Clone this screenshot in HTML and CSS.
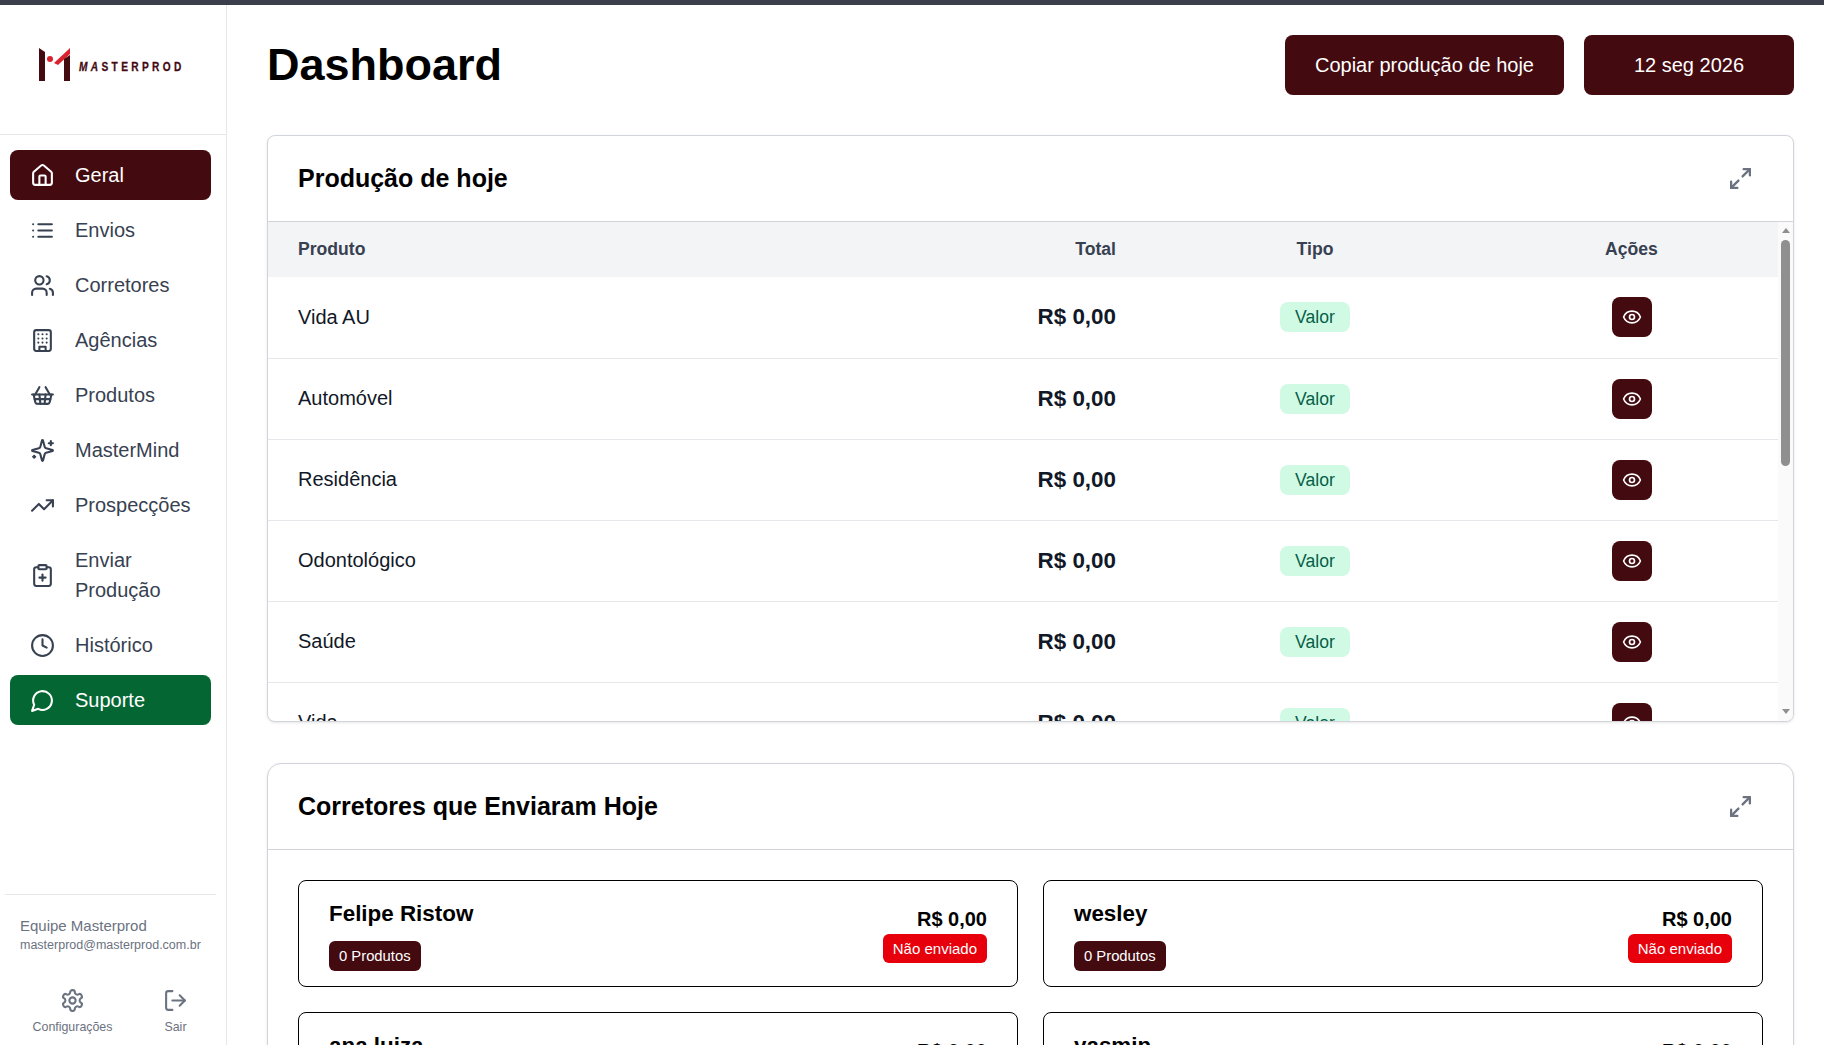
FILE: index.html
```html
<!DOCTYPE html>
<html lang="pt-BR">
<head>
    <meta charset="UTF-8">
    <meta name="viewport" content="width=device-width, initial-scale=1.0">
    <title>Dashboard</title>
    <link rel="stylesheet" href="styles.css">
</head>
<body>
    <svg class="sprite" xmlns="http://www.w3.org/2000/svg">
        <symbol id="i-house" viewBox="0 0 24 24"><path d="M15 21v-8a1 1 0 0 0-1-1h-4a1 1 0 0 0-1 1v8"/><path d="M3 10a2 2 0 0 1 .709-1.528l7-5.999a2 2 0 0 1 2.582 0l7 5.999A2 2 0 0 1 21 10v9a2 2 0 0 1-2 2H5a2 2 0 0 1-2-2z"/></symbol>
        <symbol id="i-list" viewBox="0 0 24 24"><path d="M3 12h.01M3 18h.01M3 6h.01M8 12h13M8 18h13M8 6h13"/></symbol>
        <symbol id="i-users" viewBox="0 0 24 24"><path d="M16 21v-2a4 4 0 0 0-4-4H6a4 4 0 0 0-4 4v2"/><circle cx="9" cy="7" r="4"/><path d="M22 21v-2a4 4 0 0 0-3-3.87"/><path d="M16 3.13a4 4 0 0 1 0 7.75"/></symbol>
        <symbol id="i-building" viewBox="0 0 24 24"><rect x="4" y="2" width="16" height="20" rx="2"/><path d="M9 22v-4h6v4"/><path d="M8 6h.01M16 6h.01M12 6h.01M12 10h.01M12 14h.01M16 10h.01M16 14h.01M8 10h.01M8 14h.01"/></symbol>
        <symbol id="i-basket" viewBox="0 0 24 24"><path d="m15 11-1 9"/><path d="m19 11-4-7"/><path d="M2 11h20"/><path d="m3.5 11 1.6 7.4a2 2 0 0 0 2 1.6h9.8a2 2 0 0 0 2-1.6l1.7-7.4"/><path d="M4.5 15.5h15"/><path d="m5 11 4-7"/><path d="m9 11 1 9"/></symbol>
        <symbol id="i-sparkles" viewBox="0 0 24 24"><path d="M9.937 15.5A2 2 0 0 0 8.5 14.063l-6.135-1.582a.5.5 0 0 1 0-.962L8.5 9.936A2 2 0 0 0 9.937 8.5l1.582-6.135a.5.5 0 0 1 .963 0L14.063 8.5A2 2 0 0 0 15.5 9.937l6.135 1.581a.5.5 0 0 1 0 .964L15.5 14.063a2 2 0 0 0-1.437 1.437l-1.582 6.135a.5.5 0 0 1-.963 0z"/><path d="M20 3v4"/><path d="M22 5h-4"/><path d="M4 17v2"/><path d="M5 18H3"/></symbol>
        <symbol id="i-trending" viewBox="0 0 24 24"><polyline points="22 7 13.5 15.5 8.5 10.5 2 17"/><polyline points="16 7 22 7 22 13"/></symbol>
        <symbol id="i-clipboard" viewBox="0 0 24 24"><rect x="8" y="2" width="8" height="4" rx="1"/><path d="M16 4h2a2 2 0 0 1 2 2v14a2 2 0 0 1-2 2H6a2 2 0 0 1-2-2V6a2 2 0 0 1 2-2h2"/><path d="M9 14h6"/><path d="M12 17v-6"/></symbol>
        <symbol id="i-clock" viewBox="0 0 24 24"><circle cx="12" cy="12" r="10"/><polyline points="12 6 12 12 16 14"/></symbol>
        <symbol id="i-message" viewBox="0 0 24 24"><path d="M7.9 20A9 9 0 1 0 4 16.1L2 22Z"/></symbol>
        <symbol id="i-settings" viewBox="0 0 24 24"><path d="M12.22 2h-.44a2 2 0 0 0-2 2v.18a2 2 0 0 1-1 1.73l-.43.25a2 2 0 0 1-2 0l-.15-.08a2 2 0 0 0-2.73.73l-.22.38a2 2 0 0 0 .73 2.73l.15.1a2 2 0 0 1 1 1.72v.51a2 2 0 0 1-1 1.74l-.15.09a2 2 0 0 0-.73 2.73l.22.38a2 2 0 0 0 2.73.73l.15-.08a2 2 0 0 1 2 0l.43.25a2 2 0 0 1 1 1.73V20a2 2 0 0 0 2 2h.44a2 2 0 0 0 2-2v-.18a2 2 0 0 1 1-1.73l.43-.25a2 2 0 0 1 2 0l.15.08a2 2 0 0 0 2.73-.73l.22-.39a2 2 0 0 0-.73-2.73l-.15-.08a2 2 0 0 1-1-1.74v-.5a2 2 0 0 1 1-1.74l.15-.09a2 2 0 0 0 .73-2.73l-.22-.38a2 2 0 0 0-2.73-.73l-.15.08a2 2 0 0 1-2 0l-.43-.25a2 2 0 0 1-1-1.73V4a2 2 0 0 0-2-2z"/><circle cx="12" cy="12" r="3"/></symbol>
        <symbol id="i-logout" viewBox="0 0 24 24"><path d="M9 21H5a2 2 0 0 1-2-2V5a2 2 0 0 1 2-2h4"/><polyline points="16 17 21 12 16 7"/><line x1="21" y1="12" x2="9" y2="12"/></symbol>
        <symbol id="i-expand" viewBox="0 0 24 24"><path d="M15 3h6v6"/><path d="m21 3-7 7"/><path d="m3 21 7-7"/><path d="M9 21H3v-6"/></symbol>
        <symbol id="i-eye" viewBox="0 0 24 24"><path d="M2.062 12.348a1 1 0 0 1 0-.696 10.75 10.75 0 0 1 19.876 0 1 1 0 0 1 0 .696 10.75 10.75 0 0 1-19.876 0"/><circle cx="12" cy="12" r="3"/></symbol>
    </svg>

    <div class="top-bar"></div>

    <div class="layout">
        <aside class="sidebar">
            <div class="logo">
                <svg class="logo-mark" viewBox="0 0 32 34" xmlns="http://www.w3.org/2000/svg">
                    <polygon fill="#430a10" points="0,0 6,4 6,33 0,33"/>
                    <circle fill="#d8232f" cx="11" cy="11" r="3"/>
                    <polygon fill="#d8232f" points="15,15 31,0 31,6 19,17"/>
                    <polygon fill="#430a10" points="25,11 31,7 31,33 25,33"/>
                </svg>
                <span class="logo-text"><em>MA</em>STERPROD</span>
            </div>

            <nav class="nav">
                <a class="nav-item active" href="#"><svg class="icon"><use href="#i-house"/></svg><span>Geral</span></a>
                <a class="nav-item" href="#"><svg class="icon"><use href="#i-list"/></svg><span>Envios</span></a>
                <a class="nav-item" href="#"><svg class="icon"><use href="#i-users"/></svg><span>Corretores</span></a>
                <a class="nav-item" href="#"><svg class="icon"><use href="#i-building"/></svg><span>Agências</span></a>
                <a class="nav-item" href="#"><svg class="icon"><use href="#i-basket"/></svg><span>Produtos</span></a>
                <a class="nav-item" href="#"><svg class="icon"><use href="#i-sparkles"/></svg><span>MasterMind</span></a>
                <a class="nav-item" href="#"><svg class="icon"><use href="#i-trending"/></svg><span>Prospecções</span></a>
                <a class="nav-item" href="#"><svg class="icon"><use href="#i-clipboard"/></svg><span>Enviar<br>Produção</span></a>
                <a class="nav-item" href="#"><svg class="icon"><use href="#i-clock"/></svg><span>Histórico</span></a>
                <a class="nav-item support" href="#"><svg class="icon"><use href="#i-message"/></svg><span>Suporte</span></a>
            </nav>

            <div class="side-footer">
                <p class="team">Equipe Masterprod</p>
                <p class="email">masterprod@masterprod.com.br</p>
                <div class="side-actions">
                    <a class="side-action settings" href="#"><svg class="icon"><use href="#i-settings"/></svg><span>Configurações</span></a>
                    <a class="side-action logout" href="#"><svg class="icon"><use href="#i-logout"/></svg><span>Sair</span></a>
                </div>
            </div>
        </aside>

        <main class="main">
            <header class="page-header">
                <h1>Dashboard</h1>
                <div class="header-actions">
                    <button class="btn copy-btn">Copiar produção de hoje</button>
                    <button class="btn date-btn">12 seg 2026</button>
                </div>
            </header>

            <section class="card production">
                <div class="card-header">
                    <h2>Produção de hoje</h2>
                    <svg class="expand"><use href="#i-expand"/></svg>
                </div>
                <div class="table-area">
                    <div class="table-wrap">
                        <table>
                            <colgroup>
                                <col class="col-product">
                                <col class="col-total">
                                <col class="col-type">
                                <col class="col-actions">
                            </colgroup>
                            <thead>
                                <tr><th>Produto</th><th class="right">Total</th><th>Tipo</th><th>Ações</th></tr>
                            </thead>
                            <tbody>
                                <tr><td>Vida AU</td><td class="amount">R$ 0,00</td><td><span class="tag">Valor</span></td><td><button class="eye-btn"><svg><use href="#i-eye"/></svg></button></td></tr>
                                <tr><td>Automóvel</td><td class="amount">R$ 0,00</td><td><span class="tag">Valor</span></td><td><button class="eye-btn"><svg><use href="#i-eye"/></svg></button></td></tr>
                                <tr><td>Residência</td><td class="amount">R$ 0,00</td><td><span class="tag">Valor</span></td><td><button class="eye-btn"><svg><use href="#i-eye"/></svg></button></td></tr>
                                <tr><td>Odontológico</td><td class="amount">R$ 0,00</td><td><span class="tag">Valor</span></td><td><button class="eye-btn"><svg><use href="#i-eye"/></svg></button></td></tr>
                                <tr><td>Saúde</td><td class="amount">R$ 0,00</td><td><span class="tag">Valor</span></td><td><button class="eye-btn"><svg><use href="#i-eye"/></svg></button></td></tr>
                                <tr><td>Vida</td><td class="amount">R$ 0,00</td><td><span class="tag">Valor</span></td><td><button class="eye-btn"><svg><use href="#i-eye"/></svg></button></td></tr>
                            </tbody>
                        </table>
                    </div>
                    <div class="scroll-rail">
                        <span class="arrow-up"></span>
                        <span class="scroll-thumb"></span>
                        <span class="arrow-down"></span>
                    </div>
                </div>
            </section>

            <section class="card brokers">
                <div class="card-header">
                    <h2>Corretores que Enviaram Hoje</h2>
                    <svg class="expand"><use href="#i-expand"/></svg>
                </div>
                <div class="broker-grid">
                    <div class="broker">
                        <div class="broker-info"><h3>Felipe Ristow</h3><span class="count">0 Produtos</span></div>
                        <div class="broker-status"><strong>R$ 0,00</strong><span class="not-sent">Não enviado</span></div>
                    </div>
                    <div class="broker">
                        <div class="broker-info"><h3>wesley</h3><span class="count">0 Produtos</span></div>
                        <div class="broker-status"><strong>R$ 0,00</strong><span class="not-sent">Não enviado</span></div>
                    </div>
                    <div class="broker">
                        <div class="broker-info"><h3>ana luiza</h3><span class="count">0 Produtos</span></div>
                        <div class="broker-status"><strong>R$ 0,00</strong><span class="not-sent">Não enviado</span></div>
                    </div>
                    <div class="broker">
                        <div class="broker-info"><h3>yasmin</h3><span class="count">0 Produtos</span></div>
                        <div class="broker-status"><strong>R$ 0,00</strong><span class="not-sent">Não enviado</span></div>
                    </div>
                </div>
            </section>
        </main>
    </div>
</body>
</html>
```

FILE: styles.css
```css
* {
    box-sizing: border-box;
}
html, body {
    height: 100%;
}
body {
    margin: 0;
    font-family: "Liberation Sans", Arial, sans-serif;
    background-color: #fff;
    color: #000;
    display: flex;
    flex-direction: column;
    overflow: hidden;
}
a {
    text-decoration: none;
}
.sprite {
    display: none;
}
.top-bar {
    height: 5px;
    flex-shrink: 0;
    background: #3a3f4b;
}
.layout {
    flex: 1;
    display: flex;
    min-height: 0;
}

/* sidebar */
.sidebar {
    width: 227px;
    flex-shrink: 0;
    display: flex;
    flex-direction: column;
    border-right: 1px solid #e5e7eb;
}
.logo {
    height: 130px;
    flex-shrink: 0;
    padding: 43px 0 0 39px;
    display: flex;
    align-items: flex-start;
    gap: 8px;
    border-bottom: 1px solid #e5e7eb;
}
.logo-mark {
    width: 32px;
    height: 34px;
}
.logo-text {
    display: inline-block;
    margin-top: 12px;
    font-size: 13px;
    line-height: 14px;
    font-weight: 700;
    letter-spacing: 4.3px;
    color: #430a10;
    -webkit-text-stroke: 0.3px #430a10;
    transform: scaleX(0.78);
    transform-origin: left center;
}
.logo-text em {
    font-style: italic;
}
.nav {
    padding: 15px 15px 0 10px;
    display: flex;
    flex-direction: column;
    gap: 5px;
}
.nav-item {
    display: flex;
    align-items: center;
    gap: 20px;
    padding: 10px 20px;
    border-radius: 8px;
    font-size: 20px;
    line-height: 30px;
    color: #374151;
}
.nav-item.active {
    background: #430a10;
    color: #fff;
}
.nav-item.support {
    background: #046733;
    color: #fff;
}
.icon {
    width: 25px;
    height: 25px;
    flex-shrink: 0;
    fill: none;
    stroke: currentColor;
    stroke-width: 2;
    stroke-linecap: round;
    stroke-linejoin: round;
}
.side-footer {
    margin-top: auto;
    margin-left: 5px;
    margin-right: 10px;
    padding: 21px 0 0 15px;
    height: 151px;
    border-top: 1px solid #e5e7eb;
}
.team {
    margin: 0;
    font-size: 15px;
    line-height: 20px;
    color: #6b7280;
}
.email {
    margin: 0;
    font-size: 12.5px;
    line-height: 18px;
    color: #6b7280;
}
.side-actions {
    margin-top: 34px;
    display: flex;
}
.side-action {
    display: flex;
    flex-direction: column;
    align-items: center;
    gap: 6px;
    font-size: 12.4px;
    line-height: 16px;
    color: #6b7280;
}
.side-action.settings {
    width: 105px;
}
.side-action.logout {
    margin-left: 38px;
}

/* main */
.main {
    flex: 1;
    min-width: 0;
    padding: 30px 30px 0 40px;
    overflow: hidden;
}
.page-header {
    display: flex;
    justify-content: space-between;
    align-items: center;
    margin-bottom: 40px;
}
h1 {
    margin: -1px 0 0;
    font-size: 45px;
    line-height: 60px;
}
.header-actions {
    display: flex;
    gap: 20px;
}
.btn {
    height: 60px;
    padding: 0 30px;
    border: none;
    border-radius: 8px;
    background: #430a10;
    color: #fff;
    font-family: inherit;
    font-size: 20px;
}
.date-btn {
    width: 210px;
}
.card {
    background: #fff;
    border: 1px solid #d1d5db;
    box-shadow: 0 1px 3px rgba(0, 0, 0, 0.1);
}
.production {
    height: 587px;
    border-radius: 8px;
    margin-bottom: 41px;
    display: flex;
    flex-direction: column;
    overflow: hidden;
}
.brokers {
    border-radius: 14px;
}
.card-header {
    height: 86px;
    flex-shrink: 0;
    padding: 0 30px;
    display: flex;
    justify-content: space-between;
    align-items: center;
    border-bottom: 1px solid #d1d5db;
}
h2 {
    margin: 0;
    font-size: 25px;
}
.expand {
    width: 25px;
    height: 25px;
    margin-right: 10px;
    fill: none;
    stroke: #6b7280;
    stroke-width: 2.2;
    stroke-linecap: round;
    stroke-linejoin: round;
}
.table-area {
    flex: 1;
    min-height: 0;
    display: flex;
}
.table-wrap {
    flex: 1;
    min-width: 0;
    overflow: hidden;
}

/* screenshot runs without native scrollbars, so the bar is drawn */
.scroll-rail {
    width: 15px;
    flex-shrink: 0;
    padding: 6px 0 7px;
    background: #fafafa;
    display: flex;
    flex-direction: column;
    align-items: center;
}
.arrow-up {
    border-left: 4.5px solid transparent;
    border-right: 4.5px solid transparent;
    border-bottom: 5px solid #8f8f8f;
}
.arrow-down {
    margin-top: auto;
    border-left: 4.5px solid transparent;
    border-right: 4.5px solid transparent;
    border-top: 5px solid #8f8f8f;
}
.scroll-thumb {
    width: 9px;
    height: 226px;
    margin-top: 7px;
    border-radius: 5px;
    background: #8f8f8f;
}
table {
    width: 100%;
    table-layout: fixed;
    border-collapse: collapse;
}
.col-total {
    width: 300px;
}
.col-type {
    width: 340px;
}
.col-actions {
    width: 293px;
}
th {
    height: 55px;
    padding: 0 30px;
    background: #f3f4f6;
    color: #374151;
    font-size: 17.6px;
    text-align: center;
}
th:first-child {
    text-align: left;
}
th.right {
    padding-right: 29px;
    text-align: right;
}
td {
    height: 81px;
    padding: 0 30px;
    font-size: 20px;
    color: #111827;
    border-bottom: 1px solid #e5e7eb;
}
td.amount {
    padding-right: 29px;
    text-align: right;
    font-size: 22.4px;
    font-weight: 700;
}
.tag {
    display: block;
    width: 70px;
    height: 30px;
    margin: 0 auto;
    line-height: 30px;
    border-radius: 8px;
    background: #d1fae5;
    color: #065f46;
    font-size: 17.6px;
    text-align: center;
}
.eye-btn {
    width: 40px;
    height: 40px;
    margin: 0 auto;
    padding: 0;
    border: none;
    border-radius: 8px;
    background: #430a10;
    display: flex;
    align-items: center;
    justify-content: center;
}
.eye-btn svg {
    width: 20px;
    height: 20px;
    fill: none;
    stroke: #fff;
    stroke-width: 2;
    stroke-linecap: round;
    stroke-linejoin: round;
}
.broker-grid {
    padding: 30px;
    display: grid;
    grid-template-columns: 1fr 1fr;
    gap: 25px;
}
.broker {
    display: flex;
    justify-content: space-between;
    align-items: center;
    height: 107px;
    padding: 0 30px;
    border: 1px solid #000;
    border-radius: 8px;
}
h3 {
    margin: 0 0 9px;
    font-size: 22.4px;
    line-height: 36px;
}
.count {
    display: block;
    width: fit-content;
    padding: 0 10px;
    border-radius: 6px;
    background: #430a10;
    color: #fff;
    font-size: 14.8px;
    line-height: 30px;
}
.broker-status {
    display: flex;
    flex-direction: column;
    align-items: flex-end;
}
.broker-status strong {
    font-size: 20px;
    line-height: 30px;
}
.not-sent {
    padding: 0 10px;
    border-radius: 6px;
    background: #e7000b;
    color: #fff;
    font-size: 15px;
    line-height: 29px;
}
```
